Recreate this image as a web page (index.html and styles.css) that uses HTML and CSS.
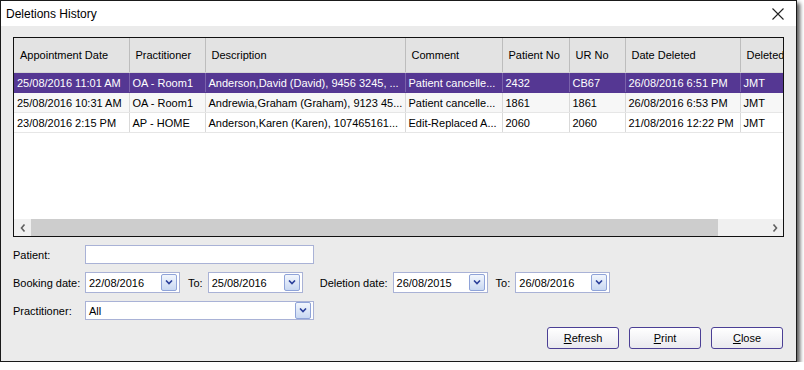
FILE: index.html
```html
<!DOCTYPE html>
<html lang="en">
<head>
    <meta charset="UTF-8">
    <title>Deletions History</title>
    <link rel="stylesheet" href="styles.css">
</head>
<body>

    <div class="window">
        <div class="titlebar">
            <span class="title">Deletions History</span>
            <span class="close-x">
                <svg width="12" height="12" viewBox="0 0 12 12"><path d="M0.5 0.5 L11.5 11.5 M11.5 0.5 L0.5 11.5" stroke="#222" stroke-width="1.1"/></svg>
            </span>
        </div>

        <div class="content">
            <!-- Grid of deleted appointments -->
            <div class="grid">
                <div class="grid-inner">
                    <table class="history">
                        <colgroup>
                            <col style="width:115px">
                            <col style="width:76px">
                            <col style="width:200px">
                            <col style="width:97px">
                            <col style="width:67px">
                            <col style="width:56px">
                            <col style="width:115px">
                            <col style="width:60px">
                        </colgroup>
                        <thead>
                            <tr>
                                <th>Appointment Date</th>
                                <th>Practitioner</th>
                                <th>Description</th>
                                <th>Comment</th>
                                <th>Patient No</th>
                                <th>UR No</th>
                                <th>Date Deleted</th>
                                <th>Deleted</th>
                            </tr>
                        </thead>
                        <tbody>
                            <tr class="selected">
                                <td>25/08/2016 11:01 AM</td>
                                <td>OA - Room1</td>
                                <td>Anderson,David (David), 9456 3245, ...</td>
                                <td>Patient cancelle...</td>
                                <td>2432</td>
                                <td>CB67</td>
                                <td>26/08/2016 6:51 PM</td>
                                <td>JMT</td>
                            </tr>
                            <tr class="alt">
                                <td>25/08/2016 10:31 AM</td>
                                <td>OA - Room1</td>
                                <td>Andrewia,Graham (Graham), 9123 45...</td>
                                <td>Patient cancelle...</td>
                                <td>1861</td>
                                <td>1861</td>
                                <td>26/08/2016 6:53 PM</td>
                                <td>JMT</td>
                            </tr>
                            <tr>
                                <td>23/08/2016 2:15 PM</td>
                                <td>AP - HOME</td>
                                <td>Anderson,Karen (Karen), 107465161...</td>
                                <td>Edit-Replaced A...</td>
                                <td>2060</td>
                                <td>2060</td>
                                <td>21/08/2016 12:22 PM</td>
                                <td>JMT</td>
                            </tr>
                        </tbody>
                    </table>
                </div>
                <div class="hscroll">
                    <span class="arrow">
                        <svg width="6" height="8" viewBox="0 0 6 8"><path d="M4.5 0.5 L1.5 4 L4.5 7.5" fill="none" stroke="#606060" stroke-width="1.6"/></svg>
                    </span>
                    <div class="track"><div class="thumb"></div></div>
                    <span class="arrow">
                        <svg width="6" height="8" viewBox="0 0 6 8"><path d="M1.5 0.5 L4.5 4 L1.5 7.5" fill="none" stroke="#606060" stroke-width="1.6"/></svg>
                    </span>
                </div>
            </div>

            <!-- Filters -->
            <div class="filters">
                <div class="row">
                    <label class="lbl">Patient:</label>
                    <div class="field wide"></div>
                </div>
                <div class="row">
                    <label class="lbl">Booking date:</label>
                    <div class="field date"><span>22/08/2016</span><span class="drop"><svg width="8" height="5" viewBox="0 0 8 5"><path d="M1 0.5 L4 3.5 L7 0.5" fill="none" stroke="#2a3f9a" stroke-width="1.6"/></svg></span></div>
                    <label class="to">To:</label>
                    <div class="field date"><span>25/08/2016</span><span class="drop"><svg width="8" height="5" viewBox="0 0 8 5"><path d="M1 0.5 L4 3.5 L7 0.5" fill="none" stroke="#2a3f9a" stroke-width="1.6"/></svg></span></div>
                    <label class="lbl-del">Deletion date:</label>
                    <div class="field date"><span>26/08/2015</span><span class="drop"><svg width="8" height="5" viewBox="0 0 8 5"><path d="M1 0.5 L4 3.5 L7 0.5" fill="none" stroke="#2a3f9a" stroke-width="1.6"/></svg></span></div>
                    <label class="to">To:</label>
                    <div class="field date"><span>26/08/2016</span><span class="drop"><svg width="8" height="5" viewBox="0 0 8 5"><path d="M1 0.5 L4 3.5 L7 0.5" fill="none" stroke="#2a3f9a" stroke-width="1.6"/></svg></span></div>
                </div>
                <div class="row">
                    <label class="lbl">Practitioner:</label>
                    <div class="field wide select"><span>All</span><span class="drop"><svg width="8" height="5" viewBox="0 0 8 5"><path d="M1 0.5 L4 3.5 L7 0.5" fill="none" stroke="#2a3f9a" stroke-width="1.6"/></svg></span></div>
                </div>
            </div>

            <div class="buttons">
                <button><u>R</u>efresh</button>
                <button><u>P</u>rint</button>
                <button><u>C</u>lose</button>
            </div>
        </div>
    </div>

</body>
</html>
```

FILE: styles.css
```css
body {
    margin: 0;
    background-color: #ffffff;
    font-family: 'Liberation Sans', Arial, sans-serif;
    font-size: 11px;
    color: #000;
}

.window {
    width: 795px;
    height: 360px;
    border: 1px solid #1a1a1a;
    background-color: #ebebeb;
    box-shadow: 3px 3px 4px rgba(0, 0, 0, 0.65);
    display: flex;
    flex-direction: column;
}

.titlebar {
    height: 25px;
    background-color: #ffffff;
    display: flex;
    align-items: center;
    justify-content: space-between;
    padding: 0 12px 0 5px;
}

.title {
    font-size: 12px;
}

.close-x {
    display: flex;
    padding-top: 1px;
}

.content {
    padding: 11px 12px 0 12px;
    display: flex;
    flex-direction: column;
}

/* grid */

.grid {
    height: 198px;
    border: 1px solid #111;
    background-color: #fff;
    display: flex;
    flex-direction: column;
}

.grid-inner {
    flex: 1;
    overflow: hidden;
}

table.history {
    border-collapse: collapse;
    table-layout: fixed;
    width: 786px;
}

table.history th {
    height: 34px;
    background-color: #e3e3e3;
    font-weight: normal;
    text-align: left;
    padding: 0 0 0 6px;
    border-left: 1px solid #bdbdbd;
    border-bottom: 1px solid #d5d5d5;
    white-space: nowrap;
    overflow: hidden;
}

table.history th:first-child {
    border-left: none;
}

table.history td {
    height: 19px;
    padding: 0 0 0 3px;
    border-left: 1px solid #d9d9d9;
    border-bottom: 1px solid #e6e6e6;
    white-space: nowrap;
    overflow: hidden;
}

table.history td:first-child {
    border-left: none;
}

table.history tr.alt td {
    background-color: #f7f7f7;
}

table.history tr.selected td {
    background-color: #553793;
    color: #ffffff;
    border-left-color: #7a62ab;
    border-bottom-color: #553793;
}

.hscroll {
    height: 17px;
    background-color: #f0f0f0;
    display: flex;
    align-items: center;
}

.hscroll .arrow {
    width: 17px;
    display: flex;
    justify-content: center;
}

.track {
    flex: 1;
    height: 17px;
}

.thumb {
    width: 687px;
    height: 17px;
    background-color: #cdcdcd;
}

/* filters */

.filters {
    padding-top: 8px;
    display: flex;
    flex-direction: column;
    gap: 8px;
}

.row {
    display: flex;
    align-items: center;
}

.lbl {
    width: 72px;
}

.field {
    height: 19px;
    border: 1px solid #a9b2d6;
    background-color: #fff;
    display: flex;
    align-items: center;
    justify-content: space-between;
    padding-left: 3px;
    box-sizing: border-box;
}

.field.wide {
    width: 229px;
}

.field.date {
    width: 95px;
    height: 21px;
}

.drop {
    width: 14px;
    height: 15px;
    margin-right: 2px;
    border: 1px solid #8fa3d8;
    border-radius: 2px;
    background: linear-gradient(#f2f6fd, #c9d8f2);
    display: flex;
    align-items: center;
    justify-content: center;
}

.to {
    margin: 0 5px 0 8px;
}

.lbl-del {
    margin: 0 5px 0 17px;
}

/* buttons */

.buttons {
    display: flex;
    justify-content: flex-end;
    gap: 10px;
    padding-top: 7px;
    padding-right: 1px;
}

button {
    width: 72px;
    height: 22px;
    font-family: 'Liberation Sans', Arial, sans-serif;
    font-size: 11px;
    color: #000;
    border: 1px solid #4b3f95;
    border-radius: 3px;
    background: linear-gradient(#ffffff, #e9e9ee);
    padding: 0;
}
```
